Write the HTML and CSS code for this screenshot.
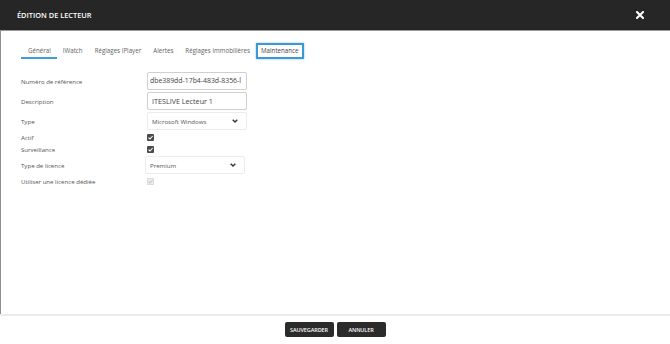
FILE: index.html
```html
<!DOCTYPE html>
<html lang="fr">
<head>
<meta charset="utf-8">
<title>Édition de lecteur</title>
<link rel="stylesheet" href="styles.css">
</head>
<body>
<div class="modal">
  <header class="modal-header">
    <h1 class="modal-title">ÉDITION DE LECTEUR</h1>
    <button class="close-btn" aria-label="Fermer">
      <svg width="8" height="8" viewBox="0 0 8 8"><path d="M1 1 L7 7 M7 1 L1 7" stroke="#fff" stroke-width="2" stroke-linecap="square"/></svg>
    </button>
  </header>
  <main class="modal-body">
    <nav class="tabs">
      <span class="tab active">Général</span>
      <span class="tab">IWatch</span>
      <span class="tab">Réglages IPlayer</span>
      <span class="tab">Alertes</span>
      <span class="tab">Réglages immobilières</span>
      <span class="tab focused">Maintenance</span>
    </nav>
    <form class="form">
      <div class="row row-input">
        <label class="label">Numéro de référence</label>
        <div class="input input-ref">dbe389dd-17b4-483d-8356-l</div>
      </div>
      <div class="row row-input">
        <label class="label">Description</label>
        <div class="input">ITESLIVE Lecteur 1</div>
      </div>
      <div class="row row-input">
        <label class="label">Type</label>
        <div class="select">
          <span>Microsoft Windows</span>
          <svg class="chev" width="6" height="4" viewBox="0 0 6 4"><path d="M0.7 0.7 L3 3 L5.3 0.7" fill="none" stroke="#333" stroke-width="1.4"/></svg>
        </div>
      </div>
      <div class="row row-check">
        <label class="label">Actif</label>
        <span class="check"><svg width="7" height="7" viewBox="0 0 7 7"><path d="M1.5 3.6 L3 5 L5.6 2" fill="none" stroke="#fff" stroke-width="1.1"/></svg></span>
      </div>
      <div class="row row-check">
        <label class="label">Surveillance</label>
        <span class="check"><svg width="7" height="7" viewBox="0 0 7 7"><path d="M1.5 3.6 L3 5 L5.6 2" fill="none" stroke="#fff" stroke-width="1.1"/></svg></span>
      </div>
      <div class="row row-licence">
        <label class="label">Type de licence</label>
        <div class="select select-shift">
          <span>Premium</span>
          <svg class="chev" width="6" height="4" viewBox="0 0 6 4"><path d="M0.7 0.7 L3 3 L5.3 0.7" fill="none" stroke="#333" stroke-width="1.4"/></svg>
        </div>
      </div>
      <div class="row row-check">
        <label class="label">Utiliser une licence dédiée</label>
        <span class="check disabled"><svg width="7" height="7" viewBox="0 0 7 7"><path d="M1.5 3.6 L3 5 L5.6 2" fill="none" stroke="#c8c8c8" stroke-width="1.1"/></svg></span>
      </div>
    </form>
  </main>
  <footer class="modal-footer">
    <button class="btn">SAUVEGARDER</button>
    <button class="btn">ANNULER</button>
  </footer>
</div>
</body>
</html>
```
FILE: styles.css
```css
html, body {
  margin: 0;
  padding: 0;
  height: 100%;
  background: #fff;
}
body {
  font-family: "Open Sans", "Liberation Sans", sans-serif;
  color: #555;
}
.modal {
  height: 344px;
  display: flex;
  flex-direction: column;
}
.modal-header {
  height: 30px;
  background: #262626;
  border-bottom: 1px solid #9a9a9a;
  display: flex;
  align-items: center;
  justify-content: space-between;
  padding: 0 26px 0 17px;
  flex: none;
}
.modal-title {
  margin: 0;
  font-size: 7.4px;
  font-weight: 600;
  color: #fff;
}
.close-btn {
  background: none;
  border: 0;
  padding: 0;
  width: 8px;
  height: 8px;
  display: flex;
}
.modal-body {
  flex: 1;
  border-left: 1px solid #8f8f8f;
  padding: 12px 0 0 20px;
}
.tabs {
  display: flex;
  height: 16px;
}
.tab {
  font-size: 6.2px;
  line-height: 16px;
  padding: 0 6px;
  color: #5f5f5f;
  box-sizing: border-box;
  height: 16px;
}
.tab.active {
  border-bottom: 2px solid #3e9fd6;
  padding: 0 6px 0 7px;
}
.tab.focused {
  margin-left: 0;
  border: 2px solid #3b98d3;
  padding: 0 3px;
  line-height: 12px;
  color: #444;
  box-shadow: 0 0 2px rgba(59,152,211,0.6);
}
.form {
  margin-top: 13px;
  display: flex;
  flex-direction: column;
}
.row {
  display: flex;
  align-items: center;
}
.label {
  width: 126px;
  font-size: 6.1px;
  color: #555;
}
.row-input {
  height: 18px;
  margin-bottom: 2px;
}
.row-input:nth-child(3) {
  margin-bottom: 1px;
}
.row-check {
  height: 12px;
}
.row-licence {
  height: 18px;
  margin: 1px 0 1px;
}
.input {
  width: 100px;
  height: 18px;
  box-sizing: border-box;
  border: 1px solid #cfcfcf;
  border-radius: 2px;
  font-size: 7.2px;
  color: #444;
  padding: 0 4px;
  line-height: 16px;
  white-space: nowrap;
  overflow: hidden;
}
.input-ref {
  padding: 0 0 0 2px;
  font-size: 6.9px;
}
.select {
  width: 100px;
  height: 18px;
  box-sizing: border-box;
  border: 1px solid #ececec;
  border-radius: 2px;
  font-size: 6.1px;
  color: #555;
  padding: 0 8px 0 4px;
  display: flex;
  align-items: center;
  justify-content: space-between;
}
.select-shift {
  margin-left: -2px;
}
.check {
  width: 7px;
  height: 7px;
  background: #4a4a4a;
  border-radius: 1px;
  display: flex;
}
.check.disabled {
  background: #eee;
  box-shadow: inset 0 0 0 1px #ddd;
}
.modal-footer {
  flex: none;
  border-top: 2px solid #ececec;
  display: flex;
  justify-content: center;
  align-items: flex-start;
  gap: 3px;
  padding-top: 6px;
  box-sizing: border-box;
  height: 30px;
}
.btn {
  height: 15px;
  width: 49px;
  background: #2b2b2b;
  color: #fff;
  border: 0;
  border-radius: 2px;
  font-family: "Open Sans", "Liberation Sans", sans-serif;
  font-size: 5.5px;
  font-weight: 600;
  padding: 0;
  letter-spacing: -0.1px;
}
```
